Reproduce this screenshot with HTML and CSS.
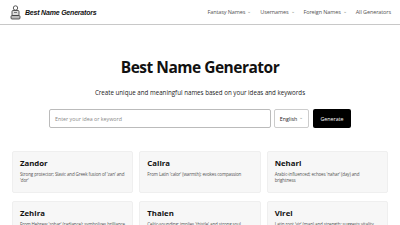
FILE: index.html
```html
<!DOCTYPE html>
<html>
<head>
<meta charset="utf-8">
<link rel="stylesheet" href="styles.css">
</head>
<body>
<header class="topbar">
  <div class="brand">
    <svg class="logo" width="11" height="15" viewBox="0 0 11 15">
      <circle cx="5.5" cy="3" r="2.2" fill="none" stroke="#333" stroke-width="0.8"/>
      <rect x="2" y="5.5" width="7" height="5" rx="1" fill="#ddd" stroke="#333" stroke-width="0.8"/>
      <rect x="1" y="10.5" width="9" height="3.5" rx="1" fill="#bbb" stroke="#333" stroke-width="0.8"/>
      <line x1="4" y1="7.5" x2="7" y2="7.5" stroke="#333" stroke-width="0.6"/>
    </svg>
    <span class="brand-name">Best Name Generators</span>
  </div>
  <nav class="nav">
    <span class="nav-item">Fantasy Names <span class="chev">⌄</span></span>
    <span class="nav-item">Usernames <span class="chev">⌄</span></span>
    <span class="nav-item">Foreign Names <span class="chev">⌄</span></span>
    <span class="nav-item">All Generators</span>
  </nav>
</header>
<main class="main">
  <h1 class="title">Best Name Generator</h1>
  <p class="subtitle">Create unique and meaningful names based on your ideas and keywords</p>
  <div class="search">
    <div class="input">Enter your idea or keyword</div>
    <div class="select">English <span class="chev">⌄</span></div>
    <div class="btn">Generate</div>
  </div>
  <div class="grid">
    <div class="card"><div class="name">Zandor</div><div class="desc">Strong protector; Slavic and Greek fusion of 'zan' and 'dor'</div></div>
    <div class="card"><div class="name">Calira</div><div class="desc">From Latin 'calor' (warmth); evokes compassion</div></div>
    <div class="card"><div class="name">Nehari</div><div class="desc">Arabic-influenced; echoes 'nahar' (day) and brightness</div></div>
    <div class="card"><div class="name">Zehira</div><div class="desc">From Hebrew 'zohar' (radiance); symbolizes brilliance</div></div>
    <div class="card"><div class="name">Thalen</div><div class="desc">Celtic-sounding; implies 'thistle' and strong soul</div></div>
    <div class="card"><div class="name">Virel</div><div class="desc">Latin root 'vir' (man) and strength; suggests vitality</div></div>
  </div>
</main>
</body>
</html>
```

FILE: styles.css
```css
* { box-sizing: border-box; margin: 0; padding: 0; }
html, body { width: 400px; height: 225px; overflow: hidden; background: #fff; }
body { font-family: "Open Sans", "Noto Sans", sans-serif; color: #111; }

.topbar {
  height: 25px;
  display: flex;
  align-items: center;
  justify-content: space-between;
  padding: 0 9px 0 10px;
  border-bottom: 1px solid #c8c8c8;
}
.brand { display: flex; align-items: center; gap: 4px; }
.logo { display: block; }
.brand-name {
  font-family: "Liberation Sans", sans-serif;
  font-style: italic;
  font-weight: bold;
  font-size: 7px;
  letter-spacing: -0.2px;
  color: #111;
}
.nav { display: flex; align-items: center; gap: 9px; }
.nav-item { font-size: 5.5px; color: #555; display: flex; align-items: center; gap: 2px; letter-spacing: -0.1px; }
.chev { font-size: 5px; color: #888; line-height: 1; position: relative; top: -1px; }

.main { padding: 0 12px; }
.title {
  margin-top: 31px;
  text-align: center;
  font-size: 15.5px;
  font-weight: 700;
  line-height: 22px;
  letter-spacing: -0.5px;
}
.subtitle {
  margin-top: 10px;
  text-align: center;
  font-size: 6.2px;
  line-height: 9px;
  color: #222;
}
.search {
  margin: 12px auto 0;
  width: 302px;
  display: flex;
  gap: 3px;
  height: 19px;
}
.input {
  flex: 1;
  border: 1px solid #bbb;
  border-radius: 2px;
  font-size: 5.3px;
  color: #888;
  display: flex;
  align-items: center;
  padding-left: 5px;
}
.select {
  width: 35px;
  border: 1px solid #ccc;
  border-radius: 2px;
  font-size: 5.3px;
  color: #222;
  display: flex;
  align-items: center;
  justify-content: center;
  gap: 2px;
}
.btn {
  width: 38px;
  margin-left: 1px;
  background: #000;
  color: #fff;
  border-radius: 2px;
  font-size: 5.3px;
  display: flex;
  align-items: center;
  justify-content: center;
}
.grid {
  margin-top: 23px;
  display: grid;
  grid-template-columns: repeat(3, 1fr);
  column-gap: 6px;
  row-gap: 8px;
}
.card {
  height: 42px;
  background: #f7f7f7;
  border: 1px solid #efefef;
  border-radius: 2px;
  padding: 6px 6px 6px 7px;
}
.name { font-size: 7.8px; font-weight: 700; line-height: 10px; color: #111; }
.desc { margin-top: 3px; font-size: 4.5px; line-height: 6px; color: #555; letter-spacing: -0.12px; }
```
